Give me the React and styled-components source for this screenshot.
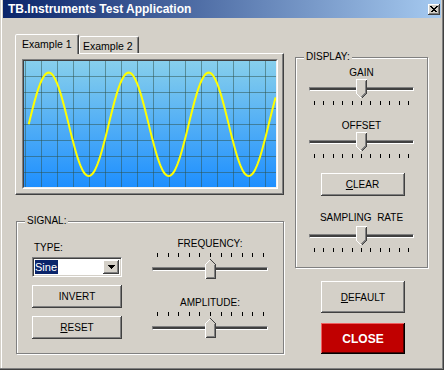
import React from 'react';
import styled, { createGlobalStyle } from 'styled-components';

const FACE = '#d4d0c8';

const GlobalStyle = createGlobalStyle`
  html, body {
    margin: 0;
    padding: 0;
    background: ${FACE};
  }
  * {
    box-sizing: border-box;
  }
`;

// sine wave points for the scope
const buildWave = () => {
    const pts = [];
    for (let x = 4.7; x <= 252; x += 1) {
        const y = 63.3 - 51.7 * Math.sin((2 * Math.PI * (x - 4.7)) / 80);
        pts.push(`${x.toFixed(1)},${y.toFixed(1)}`);
    }
    return pts.join(' ');
};

function Thumb({ dir }) {
    if (dir === 'up') {
        return (
            <svg width="11" height="20" viewBox="0 0 11 20" shapeRendering="crispEdges">
                <polygon points="5,0 6,0 11,5 11,20 0,20 0,5" fill={FACE} />
                <polyline points="0.5,19.5 0.5,5.5 5.5,0.5" fill="none" stroke="#fff" />
                <polyline points="5.5,0.5 10.5,5.5 10.5,19.5 0.5,19.5" fill="none" stroke="#404040" />
                <polyline points="9.5,6 9.5,18.5 1.5,18.5" fill="none" stroke="#808080" />
            </svg>
        );
    }
    return (
        <svg width="11" height="20" viewBox="0 0 11 20" shapeRendering="crispEdges">
            <polygon points="0,0 11,0 11,15 6,20 5,20 0,15" fill={FACE} />
            <polyline points="5.5,19.5 0.5,14.5 0.5,0.5 10.5,0.5" fill="none" stroke="#fff" />
            <polyline points="10.5,0.5 10.5,14.5 5.5,19.5" fill="none" stroke="#404040" />
            <polyline points="9.5,1.5 9.5,14 5.5,18" fill="none" stroke="#808080" />
        </svg>
    );
}

function Slider({ width, value = 0.5, dir = 'down', padL = 5, padR = 5 }) {
    const left = Math.round(padL + value * (width - padL - padR - 1) - 5);
    const ticks = (
        <Ticks $pl={padL} $pr={padR} $dir={dir}>
            {Array.from({ length: 11 }).map((_, i) => (
                <Tick key={i} />
            ))}
        </Ticks>
    );
    const rail = (
        <Rail>
            <Track />
            <ThumbSpot style={{ left }}>
                <Thumb dir={dir} />
            </ThumbSpot>
        </Rail>
    );
    return (
        <SliderBox $w={width}>
            {dir === 'down' ? rail : ticks}
            {dir === 'down' ? ticks : rail}
        </SliderBox>
    );
}

export default function App() {
    const wave = buildWave();
    const vLines = Array.from({ length: 16 }).map((_, i) => 1.5 + i * 16);
    const hLines = Array.from({ length: 7 }).map((_, i) => 15.5 + i * 16);

    return (
        <>
            <GlobalStyle />
            <Window>
                <TitleBar>
                    <Title>TB.Instruments Test Application</Title>
                    <CloseBox>
                        <svg width="8" height="7" viewBox="0 0 8 7" shapeRendering="crispEdges">
                            <path d="M0.5 0.5 L6.5 6.5 M1.5 0.5 L7.5 6.5 M6.5 0.5 L0.5 6.5 M7.5 0.5 L1.5 6.5" stroke="#000" strokeWidth="1" />
                        </svg>
                    </CloseBox>
                </TitleBar>

                <Body>
                    <LeftCol>
                        <TabStrip>
                            <Tab $active $w={64}>Example 1</Tab>
                            <Tab $w={60}>Example 2</Tab>
                        </TabStrip>
                        <TabPanel>
                            <PlotFrame>
                                <PlotScreen>
                                    <svg width="252" height="126" viewBox="0 0 252 126">
                                        <defs>
                                            <linearGradient id="scopeBg" x1="0" y1="0" x2="0" y2="1">
                                                <stop offset="0" stopColor="#87cfec" />
                                                <stop offset="1" stopColor="#1e8fff" />
                                            </linearGradient>
                                        </defs>
                                        <rect width="252" height="126" fill="url(#scopeBg)" />
                                        <g stroke="rgba(45,80,70,0.5)" strokeWidth="1" shapeRendering="crispEdges">
                                            {vLines.map((x) => (
                                                <line key={`v${x}`} x1={x} y1="0" x2={x} y2="126" />
                                            ))}
                                            {hLines.map((y) => (
                                                <line key={`h${y}`} x1="0" y1={y} x2="252" y2={y} />
                                            ))}
                                        </g>
                                        <polyline points={wave} fill="none" stroke="#ffff00" strokeWidth="2" />
                                    </svg>
                                </PlotScreen>
                            </PlotFrame>
                        </TabPanel>

                        <SignalGroup>
                            <GroupTitle>SIGNAL:</GroupTitle>
                            <SignalLeft>
                                <Label $left>TYPE:</Label>
                                <Combo>
                                    <ComboText>
                                        <Selected>Sine</Selected>
                                    </ComboText>
                                    <DropBtn>
                                        <svg width="7" height="4" viewBox="0 0 7 4" shapeRendering="crispEdges">
                                            <polygon points="0,0 7,0 3.5,4" fill="#000" />
                                        </svg>
                                    </DropBtn>
                                </Combo>
                                <Button $w={90} $h={23} $mt={8}>INVERT</Button>
                                <Button $w={90} $h={23} $mt={8}>
                                    <u>R</u>ESET
                                </Button>
                            </SignalLeft>
                            <SignalRight>
                                <Label $mb={3}>FREQUENCY:</Label>
                                <Slider width={116} dir="up" padL={5} padR={4} />
                                <Label $mt={18} $mb={3}>AMPLITUDE:</Label>
                                <Slider width={116} dir="up" padL={5} padR={4} />
                            </SignalRight>
                        </SignalGroup>
                    </LeftCol>

                    <RightCol>
                        <DisplayGroup>
                            <GroupTitle>DISPLAY:</GroupTitle>
                            <Label>GAIN</Label>
                            <Slider width={105} />
                            <Label $mt={15}>OFFSET</Label>
                            <Slider width={105} />
                            <Button $w={84} $h={23} $mt={15} $shift={2}>
                                <u>C</u>LEAR
                            </Button>
                            <Label $mt={16} $mb={2}>SAMPLING&nbsp;&nbsp;RATE</Label>
                            <Slider width={105} />
                        </DisplayGroup>
                        <Button $w={84} $h={32} $mt={13} $side>
                            <u>D</u>EFAULT
                        </Button>
                        <CloseButton $w={84} $h={31} $mt={10} $side>
                            CLOSE
                        </CloseButton>
                    </RightCol>
                </Body>
            </Window>
        </>
    );
}

const Window = styled.div`
    width: 444px;
    height: 370px;
    background: ${FACE};
    padding: 0 3px 3px 3px;
    box-shadow: inset -1px -1px #404040, inset -2px -2px #808080, inset 1px 0 ${FACE}, inset 2px 0 #fff;
    font-family: "Liberation Sans", Arial, sans-serif;
    font-size: 10px;
    color: #000;
    display: flex;
    flex-direction: column;
    overflow: hidden;
`;

const TitleBar = styled.div`
    flex: none;
    height: 18px;
    display: flex;
    align-items: center;
    justify-content: space-between;
    padding: 0 1px 0 5px;
    background: linear-gradient(to right, #0a246a, #a6caf0);
`;

const Title = styled.span`
    color: #fff;
    font-weight: bold;
    font-size: 12px;
    line-height: 14px;
`;

const CloseBox = styled.span`
    width: 12px;
    height: 11px;
    display: flex;
    align-items: center;
    justify-content: center;
    background: ${FACE};
    box-shadow: inset -1px -1px #404040, inset 1px 1px #fff, inset -2px -2px #808080;
`;

const Body = styled.div`
    display: flex;
    gap: 11px;
    padding: 16px 0 0 12px;
`;

const LeftCol = styled.div`
    width: 269px;
    display: flex;
    flex-direction: column;
`;

const RightCol = styled.div`
    width: 134px;
    margin-top: 23px;
    display: flex;
    flex-direction: column;
`;

const TabStrip = styled.div`
    display: flex;
    height: 20px;
    margin-bottom: -1px;
    position: relative;
    z-index: 1;
`;

const Tab = styled.div`
    width: ${(p) => p.$w}px;
    height: ${(p) => (p.$active ? 20 : 17)}px;
    margin-top: ${(p) => (p.$active ? 0 : 2)}px;
    padding: 3px 0 0 ${(p) => (p.$active ? 6 : 3)}px;
    background: ${FACE};
    border: 1px solid;
    border-bottom: none;
    border-color: #fff #404040 transparent #fff;
    border-radius: 2px 2px 0 0;
    box-shadow: inset -1px 0 #808080;
    font-size: 10.5px;
    line-height: 12px;
    white-space: nowrap;
`;

const TabPanel = styled.div`
    width: 269px;
    height: 142px;
    padding: 5px 0 0 6px;
    border: 1px solid;
    border-color: #fff #404040 #404040 #fff;
    box-shadow: inset -1px -1px #808080;
`;

const PlotFrame = styled.div`
    width: 256px;
    height: 130px;
    border: 1px solid;
    border-color: #808080 #fff #fff #808080;
`;

const PlotScreen = styled.div`
    width: 254px;
    height: 128px;
    border: 1px solid;
    border-color: #404040 #f0f0f0 #f0f0f0 #404040;
    svg {
        display: block;
    }
`;

const Group = styled.div`
    position: relative;
    border: 1px solid #808080;
    box-shadow: inset 1px 1px #fff, 1px 1px #fff;
`;

const GroupTitle = styled.span`
    position: absolute;
    top: -7px;
    left: 8px;
    padding: 0 2px;
    background: ${FACE};
    line-height: 12px;
`;

const SignalGroup = styled(Group)`
    width: 268px;
    height: 133px;
    margin: 26px 0 0 1px;
    padding: 16px 0 0 15px;
    display: flex;
    gap: 30px;
`;

const SignalLeft = styled.div`
    width: 90px;
    padding-top: 4px;
    display: flex;
    flex-direction: column;
`;

const SignalRight = styled.div`
    width: 116px;
    display: flex;
    flex-direction: column;
    align-items: center;
`;

const DisplayGroup = styled(Group)`
    width: 133px;
    height: 211px;
    padding-top: 9px;
    display: flex;
    flex-direction: column;
    align-items: center;
`;

const Label = styled.div`
    line-height: 12px;
    white-space: nowrap;
    margin-top: ${(p) => p.$mt || 0}px;
    margin-bottom: ${(p) => p.$mb || 0}px;
    padding-left: ${(p) => (p.$left ? 2 : 0)}px;
    align-self: ${(p) => (p.$left ? 'flex-start' : 'center')};
`;

const Combo = styled.div`
    margin-top: 3px;
    width: 90px;
    height: 20px;
    display: flex;
    border: 1px solid;
    border-color: #808080 #fff #fff #808080;
    box-shadow: inset 1px 1px #404040, inset -1px -1px ${FACE};
    background: #fff;
    padding: 2px;
`;

const ComboText = styled.div`
    flex: 1;
    display: flex;
    align-items: center;
`;

const Selected = styled.span`
    background: #0a246a;
    color: #fff;
    font-size: 11px;
    line-height: 14px;
    padding: 0 1px 0 0;
`;

const DropBtn = styled.div`
    width: 16px;
    height: 14px;
    display: flex;
    align-items: center;
    justify-content: center;
    background: ${FACE};
    box-shadow: inset -1px -1px #404040, inset 1px 1px #fff, inset -2px -2px #808080;
`;

const Button = styled.button`
    flex: none;
    width: ${(p) => p.$w}px;
    height: ${(p) => p.$h}px;
    margin-top: ${(p) => p.$mt || 0}px;
    margin-left: ${(p) => (p.$side ? 26 : p.$shift || 0)}px;
    align-self: ${(p) => (p.$side ? 'flex-start' : 'auto')};
    padding: 0;
    border: none;
    background: ${FACE};
    box-shadow: inset -1px -1px #404040, inset 1px 1px #fff, inset -2px -2px #808080;
    font-family: "Liberation Sans", Arial, sans-serif;
    font-size: 10px;
    color: #000;
`;

const CloseButton = styled(Button)`
    background: #c00000;
    color: #fff;
    font-weight: bold;
    font-size: 12px;
    box-shadow: inset -1px -1px #000, inset 1px 1px #f06060, inset -2px -2px #500000;
`;

const SliderBox = styled.div`
    width: ${(p) => p.$w}px;
    display: flex;
    flex-direction: column;
`;

const Rail = styled.div`
    position: relative;
    height: 20px;
    padding-top: 8px;
`;

const Track = styled.div`
    height: 4px;
    background: #404040;
    border: 1px solid;
    border-color: #808080 #fff #fff #808080;
`;

const ThumbSpot = styled.div`
    position: absolute;
    top: 0;
    width: 11px;
    height: 20px;
    svg {
        display: block;
    }
`;

const Ticks = styled.div`
    display: flex;
    justify-content: space-between;
    padding: 0 ${(p) => p.$pr}px 0 ${(p) => p.$pl}px;
    margin-top: ${(p) => (p.$dir === 'down' ? 2 : 0)}px;
    margin-bottom: ${(p) => (p.$dir === 'up' ? 2 : 0)}px;
`;

const Tick = styled.span`
    width: 1px;
    height: 4px;
    background: #000;
`;
